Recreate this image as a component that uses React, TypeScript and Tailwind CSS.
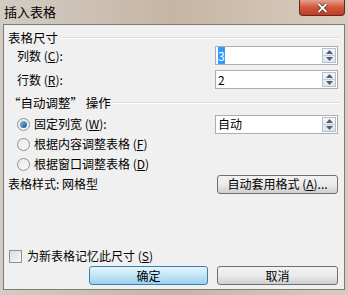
import { FC, ReactNode } from "react";

const font = { fontFamily: '"Noto Sans CJK SC", "Noto Sans", sans-serif' };

const Spin: FC = () => (
  <div className="flex flex-col w-[14px] h-[15px] mr-[1px] border border-[#b7c0cb] bg-gradient-to-b from-[#f4f6f9] to-[#dfe5ec]">
    <div className="flex-1 flex items-center justify-center border-b border-[#c5ccd5]">
      <svg width="7" height="4" viewBox="0 0 7 4"><path d="M0 4 L3.5 0 L7 4 Z" fill="#4c607a" /></svg>
    </div>
    <div className="flex-1 flex items-center justify-center">
      <svg width="7" height="4" viewBox="0 0 7 4"><path d="M0 0 L3.5 4 L7 0 Z" fill="#4c607a" /></svg>
    </div>
  </div>
);

const SpinBox: FC<{ children: ReactNode }> = ({ children }) => (
  <div className="w-[123px] h-[19px] border border-[#abadb3] bg-white flex items-center justify-between">
    <div className="pl-[2px] text-[12px] leading-none text-black">{children}</div>
    <Spin />
  </div>
);

const Radio: FC<{ on?: boolean }> = ({ on }) => (
  <div className="w-[13px] h-[13px] rounded-full border border-[#8e8f8f] bg-gradient-to-br from-[#e9e9e9] to-[#fafafa] flex items-center justify-center">
    {on && <div className="w-[7px] h-[7px] rounded-full bg-gradient-to-br from-[#7fc0ee] to-[#15519b]" />}
  </div>
);

const Btn: FC<{ children: ReactNode; w: string; def?: boolean }> = ({ children, w, def }) => (
  <div
    className={`${w} h-[19px] rounded-[3px] border flex items-center justify-center text-[12px] text-black ${
      def
        ? "border-[#3c7fb1] bg-gradient-to-b from-[#e5f4fc] via-[#c4e5f6] to-[#98d1ef]"
        : "border-[#707070] bg-gradient-to-b from-[#f2f2f2] via-[#ebebeb] to-[#cfcfcf]"
    }`}
  >
    {children}
  </div>
);

const Header: FC<{ children: ReactNode }> = ({ children }) => (
  <div className="flex items-center h-[16px] pl-[4px] pr-[5px]">
    <span className="text-[12.5px] leading-none text-black whitespace-nowrap">{children}</span>
    <div className="flex-1 ml-[2px] h-[2px] border-t border-[#d5dfe5] border-b border-b-white" />
  </div>
);

export default function App() {
  return (
    <div
      style={font}
      className="w-[348px] h-[295px] flex flex-col bg-gradient-to-r from-[#d3ccc4] via-[#c6b5a3] to-[#d9ccbe] overflow-hidden"
    >
      {/* title bar */}
      <div className="h-[24px] flex items-start justify-between pl-[4px]">
        <span className="mt-[5px] text-[13px] leading-none text-black">插入表格</span>
        <div className="mr-[3px] w-[46px] h-[16px] rounded-b-[4px] border border-t-0 border-[#5e2a1f] bg-gradient-to-b from-[#e8a090] via-[#d0563a] to-[#c43c22] flex items-center justify-center">
          <svg width="11" height="10" viewBox="0 0 11 10">
            <path d="M1.5 1 L9.5 9 M9.5 1 L1.5 9" stroke="#3a1a12" strokeWidth="3.2" />
            <path d="M1.5 1 L9.5 9 M9.5 1 L1.5 9" stroke="#ffffff" strokeWidth="2" />
          </svg>
        </div>
      </div>

      {/* client */}
      <div className="flex-1 mx-[3px] mb-[5px] border border-[#7c7c7c] bg-[#f0f0f0] flex flex-col pt-[5px] text-[12px] text-black">
        <Header>表格尺寸</Header>
        <div className="flex items-center justify-between h-[19px] pl-[13px] pr-[6px]">
          <span>列数 (<u>C</u>):</span>
          <SpinBox>
            <span className="bg-[#3399ff] text-white px-[0px]">3</span>
          </SpinBox>
        </div>
        <div className="flex items-center justify-between h-[19px] mt-[5px] pl-[13px] pr-[6px]">
          <span>行数 (<u>R</u>):</span>
          <SpinBox>2</SpinBox>
        </div>

        <div className="mt-[6px]">
          <Header>“自动调整” 操作</Header>
        </div>

        <div className="flex items-center justify-between h-[18px] mt-[4px] pl-[13px] pr-[6px]">
          <div className="flex items-center gap-[4px]">
            <Radio on />
            <span>固定列宽 (<u>W</u>):</span>
          </div>
          <SpinBox>自动</SpinBox>
        </div>
        <div className="flex items-center h-[18px] mt-[2px] pl-[13px] gap-[4px]">
          <Radio />
          <span>根据内容调整表格 (<u>F</u>)</span>
        </div>
        <div className="flex items-center h-[18px] mt-[2px] pl-[13px] gap-[4px]">
          <Radio />
          <span>根据窗口调整表格 (<u>D</u>)</span>
        </div>

        <div className="flex items-center justify-between h-[20px] mt-[1px] pl-[4px] pr-[6px]">
          <span>表格样式: 网格型</span>
          <Btn w="w-[121px]">
            自动套用格式 (<u>A</u>)...
          </Btn>
        </div>

        <div className="flex-1" />

        <div className="flex items-center h-[16px] pl-[5px] gap-[5px]">
          <div className="w-[13px] h-[13px] border border-[#8e8f8f] bg-gradient-to-br from-[#dcdcdc] to-[#f8f8f8]" />
          <span>为新表格记忆此尺寸 (<u>S</u>)</span>
        </div>

        <div className="flex justify-end gap-[9px] mt-[2px] mb-[4px] pr-[6px]">
          <Btn w="w-[119px]" def>
            确定
          </Btn>
          <Btn w="w-[121px]">取消</Btn>
        </div>
      </div>
    </div>
  );
}
